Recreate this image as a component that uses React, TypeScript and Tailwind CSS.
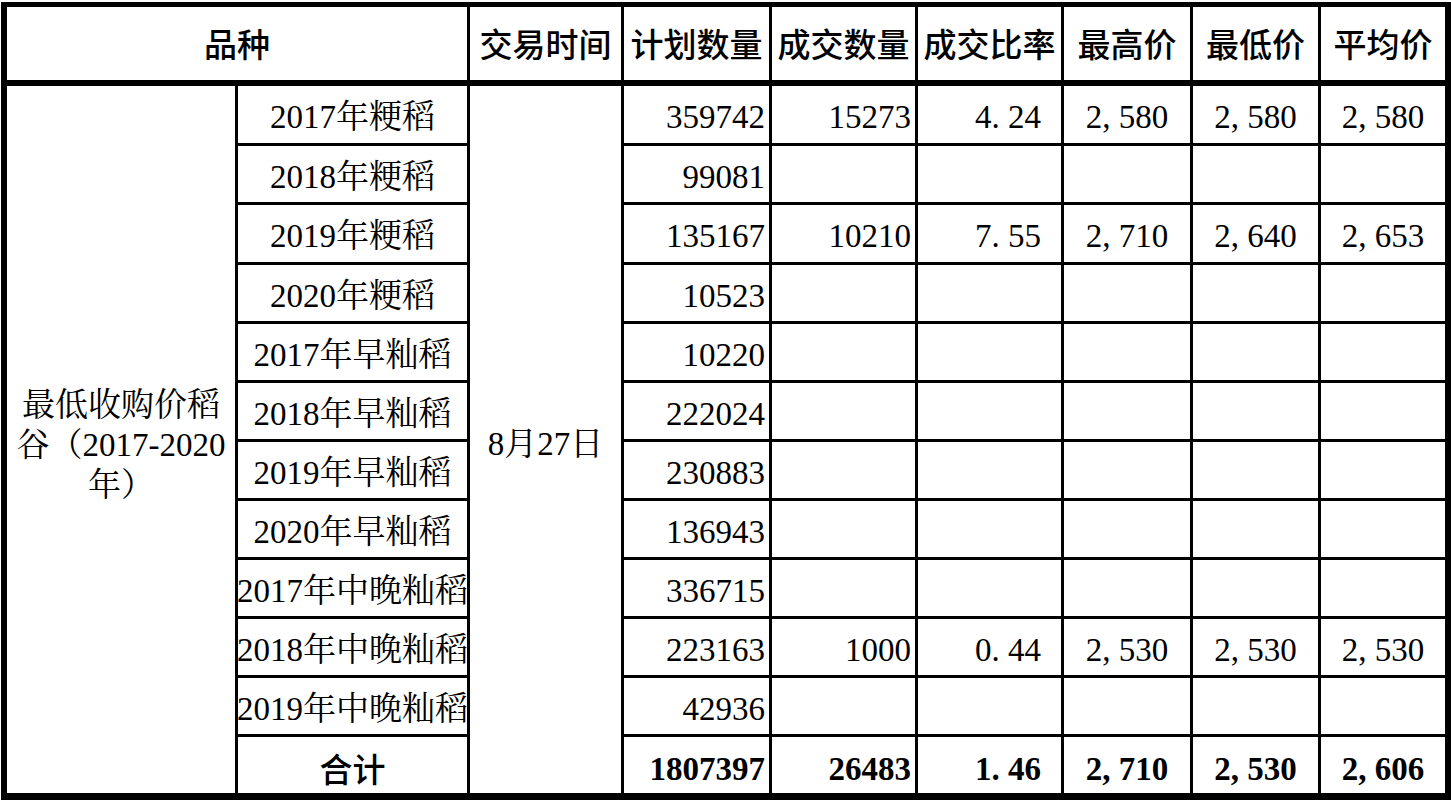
import React from "react";

const COLS = "grid-cols-[228px_229px_151px_145px_143px_143px_126px_125px_124px]";

const serif = "font-['Liberation_Serif','Noto_Serif_CJK_SC','Noto_Sans_CJK_SC',serif]";
const sans = "font-['Noto_Sans_CJK_SC','Noto_Sans',sans-serif]";

const rows: string[][] = [
  ["2017年粳稻", "359742", "15273", "4.24", "2,580", "2,580", "2,580"],
  ["2018年粳稻", "99081"],
  ["2019年粳稻", "135167", "10210", "7.55", "2,710", "2,640", "2,653"],
  ["2020年粳稻", "10523"],
  ["2017年早籼稻", "10220"],
  ["2018年早籼稻", "222024"],
  ["2019年早籼稻", "230883"],
  ["2020年早籼稻", "136943"],
  ["2017年中晚籼稻", "336715"],
  ["2018年中晚籼稻", "223163", "1000", "0.44", "2,530", "2,530", "2,530"],
  ["2019年中晚籼稻", "42936"],
];

const total = ["1807397", "26483", "1.46", "2,710", "2,530", "2,606"];

// half-width punctuation like SimSun
function Num({ v }: { v?: string }) {
  if (!v) return null;
  return (
    <>
      {v.split("").map((c, i) =>
        c === "." || c === "," ? (
          <span key={i} className="inline-block w-[0.5em] text-left">
            {c}
          </span>
        ) : (
          <span key={i}>{c}</span>
        )
      )}
    </>
  );
}

function ValueCells({ vals, bold }: { vals: (string | undefined)[]; bold?: boolean }) {
  const w = bold ? "font-bold pt-[8px]" : "pt-[6px]";
  return (
    <>
      <div className={`bg-white flex items-center justify-end pr-[4px] ${w}`}>
        <Num v={vals[0]} />
      </div>
      <div className={`bg-white flex items-center justify-end pr-[4px] ${w}`}>
        <Num v={vals[1]} />
      </div>
      <div className={`bg-white flex items-center justify-end pr-[20px] ${w}`}>
        <Num v={vals[2]} />
      </div>
      <div className={`bg-white flex items-center justify-center ${w}`}>
        <Num v={vals[3]} />
      </div>
      <div className={`bg-white flex items-center justify-center ${w}`}>
        <Num v={vals[4]} />
      </div>
      <div className={`bg-white flex items-center justify-center ${w}`}>
        <Num v={vals[5]} />
      </div>
    </>
  );
}

export default function App() {
  const headers = ["交易时间", "计划数量", "成交数量", "成交比率", "最高价", "最低价", "平均价"];

  return (
    <div className="bg-white w-[1451px] h-[800px] pt-[2px] pl-[1px]">
      <div className="bg-black w-[1450px] pt-[5px] pl-[6px] pr-[6px] pb-[7px] flex flex-col gap-[6px] text-black">
        {/* Header */}
        <div className={`grid ${COLS} grid-rows-[73px] gap-[3px] text-[33px] leading-none font-medium ${sans}`}>
          <div className="col-span-2 bg-white flex items-center justify-center">品种</div>
          {headers.map((h) => (
            <div key={h} className="bg-white flex items-center justify-center whitespace-nowrap">
              {h}
            </div>
          ))}
        </div>

        {/* Body */}
        <div
          className={`grid ${COLS} grid-rows-[57px_56px_57px_56px_56px_56px_56px_56px_56px_56px_56px_56px] gap-[3px] text-[33px] leading-none ${serif}`}
        >
          <div className="col-start-1 row-start-1 row-span-12 bg-white flex items-center justify-center text-center leading-[40px] pt-[10px]">
            <div>
              最低收购价稻
              <br />
              谷（2017-2020
              <br />
              年）
            </div>
          </div>
          <div className="col-start-3 row-start-1 row-span-12 bg-white flex items-center justify-center pt-[10px]">
            8月27日
          </div>

          {rows.map((r) => (
            <React.Fragment key={r[0]}>
              <div className="bg-white flex items-center justify-center whitespace-nowrap overflow-hidden pt-[6px]">
                {r[0]}
              </div>
              <ValueCells vals={r.slice(1)} />
            </React.Fragment>
          ))}

          <div className={`bg-white flex items-center justify-center font-medium pt-[6px] ${sans}`}>合计</div>
          <ValueCells vals={total} bold />
        </div>
      </div>
    </div>
  );
}
